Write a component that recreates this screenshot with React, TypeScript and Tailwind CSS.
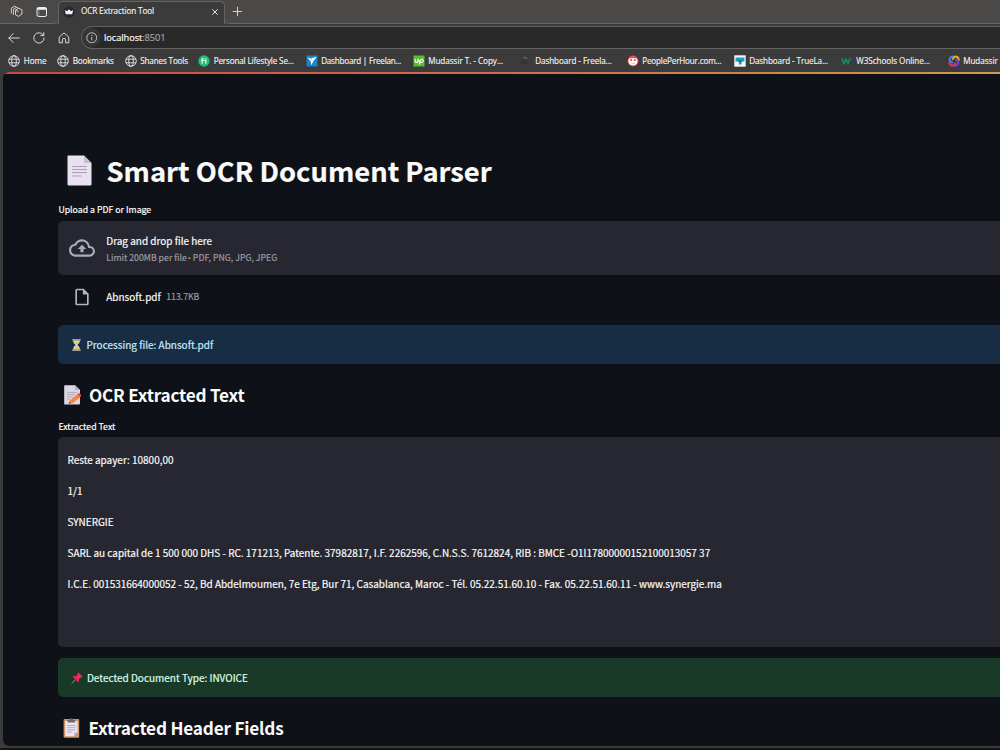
import type { ReactNode } from 'react';

const Globe = () => (
  <svg viewBox="0 0 12 12" className="size-3" fill="none" stroke="#e4e4e4" strokeWidth="0.9">
    <circle cx="6" cy="6" r="5.3" />
    <ellipse cx="6" cy="6" rx="2.3" ry="5.3" />
    <path d="M1 4.2h10M1 7.8h10" />
  </svg>
);

const Fiverr = () => (
  <svg viewBox="0 0 12 12" className="size-3">
    <circle cx="6" cy="6" r="5.7" fill="#1dbf73" />
    <path d="M3 5.2h4.9v3.6M4.2 8.8V4.6c0-.9.5-1.4 1.5-1.3" fill="none" stroke="#fff" strokeWidth="1.1" />
    <circle cx="7.9" cy="3.6" r=".65" fill="#fff" />
  </svg>
);

const Freelancer = () => (
  <svg viewBox="0 0 12 12" className="size-3">
    <path d="M.5 .5h11v11H.5z" fill="#1886ce" />
    <path d="M1.4 2.600l3.400 1L10.800 1.800 7.600 6 5.200 10.300 4.800 6.500z" fill="#fff" />
    <path d="M4.800 3.600 6 5.400" stroke="#1886ce" strokeWidth=".6" />
  </svg>
);

const Upwork = () => (
  <svg viewBox="0 0 12 12" className="size-3">
    <path d="M.5 .5h11v11H.5z" fill="#5bbc2e" />
    <path d="M2 3.8v2.1c0 1.9 3 1.9 3 0V3.8c.6 1.9 1.3 2.9 2 3.4M6.4 9.6l1-4.2c.5-1.8 3-1.4 2.9.4-.1 1.7-2 2-3.1.9" fill="none" stroke="#fff" strokeWidth="1.1" />
  </svg>
);

const Arc = () => (
  <svg viewBox="0 0 12 12" className="size-3">
    <path d="M2.500 3C4.300 1.300 6.800 1.800 8 4.600 6 3.200 4.500 3 2.500 3z" fill="#4a7aa8" />
    <path d="M0 8.5C1 6 3.5 4.8 6 5.2L8.5 9z" fill="#2f3438" />
  </svg>
);

const PeoplePerHour = () => (
  <svg viewBox="0 0 12 12" className="size-3">
    <circle cx="6" cy="6" r="5.1" fill="#fff" stroke="#e5402f" strokeWidth="1" />
    <path d="M1.4 3.6C3 .6 9 .6 10.6 3.6 8 2.7 4 2.7 1.4 3.6z" fill="#e5402f" />
    <circle cx="4.1" cy="5.1" r="1" fill="#e5402f" />
    <circle cx="7.9" cy="5.1" r="1" fill="#e5402f" />
    <path d="M4 8.3q2 .8 4 0" stroke="#f0a79e" strokeWidth=".6" fill="none" />
  </svg>
);

const TrueLancer = () => (
  <svg viewBox="0 0 12 12" className="size-3">
    <path d="M.3 .3h11.4v11.4H.3z" fill="#f6f6f6" />
    <path d="M1.6 2.6h8.8v4.2l-1.8-.6-1 1V9.4H4.8V7.2l-1.3-1-1.9.8z" fill="#1a9fbd" />
    <path d="M4 6l2 1.5L8 6v-.8H4z" fill="#166f92" />
  </svg>
);

const W3 = () => (
  <svg viewBox="0 0 12 12" className="size-3">
    <path d="M.8 3.4 3 8.600 5 4.200 7 8.600 8.900 3.600" fill="none" stroke="#139460" strokeWidth="1.500" />
    <path d="M9.6 3.2h1.400l-.8 1.200c.8.200.8 1.400-.5 1.400" fill="none" stroke="#11704b" strokeWidth=".7" />
  </svg>
);

const Swirl = () => (
  <svg viewBox="0 0 12 12" className="size-3" fill="none" strokeWidth="2.100">
    <path d="M5.600 1.500C2.600 1 .900 3.800 2.100 6.100 2.700 7.200 3.800 7.500 4.800 7.300" stroke="#2b8df0" />
    <path d="M10.700 5.600C11 2.600 8.400 .7 6.200 2.100 5 2.900 4.800 3.900 5 4.800" stroke="#f5a21b" />
    <path d="M6.400 10.600c3 .5 4.700-2.300 3.500-4.600C9.300 4.900 8.200 4.600 7.200 4.800" stroke="#7547d8" />
    <path d="M1.300 6.800c-.2 3 2.300 4.700 4.500 3.300C7 9.300 7.200 8.300 7 7.400" stroke="#ee2f5b" />
  </svg>
);

const bookmarks: { label: string; icon: ReactNode; cls: string }[] = [
  { label: 'Home', icon: <Globe />, cls: 'w-[49px]' },
  { label: 'Bookmarks', icon: <Globe />, cls: 'w-[67.5px] tracking-[-0.17px]' },
  { label: 'Shanes Tools', icon: <Globe />, cls: 'w-[73.5px] tracking-[-0.14px]' },
  { label: 'Personal Lifestyle Se...', icon: <Fiverr />, cls: 'w-[107.5px] tracking-[-0.14px]' },
  { label: 'Dashboard | Freelan...', icon: <Freelancer />, cls: 'w-[107px] tracking-[-0.22px]' },
  { label: 'Mudassir T. - Copy...', icon: <Upwork />, cls: 'w-[107px] tracking-[-0.03px]' },
  { label: 'Dashboard - Freela...', icon: <Arc />, cls: 'w-[107px] tracking-[-0.07px]' },
  { label: 'PeoplePerHour.com...', icon: <PeoplePerHour />, cls: 'w-[107px] tracking-[-0.16px]' },
  { label: 'Dashboard - TrueLa...', icon: <TrueLancer />, cls: 'w-[107px] tracking-[-0.1px]' },
  { label: 'W3Schools Online...', icon: <W3 />, cls: 'w-[107px] tracking-[-0.02px]' },
  { label: 'Mudassir', icon: <Swirl />, cls: 'tracking-[-0.03px]' },
];

const Browser = () => (
  <header className="shrink-0 font-['Open_Sans',sans-serif] [-webkit-text-stroke:0.15px]">
    <div className="flex h-6 bg-[#4b4947]">
      <div className="flex w-[58px] items-center gap-[13px] rounded-br-[5px] border-b border-[#696867] pl-2.5">
        <svg viewBox="0 0 13 13" className="size-[13px]" fill="none" stroke="#dedede" strokeWidth=".9" strokeLinejoin="round">
          <path d="M5.500 5.200 8.900 3.300l3 1.500v4.200l-3.300 2.400-3.100-1.600zM5.500 5.200l3.100 1.500" />
          <path d="M3.400 9.800V4.200L6.800 2.300l1.500.7M1.300 8.600V3.200L4.800 1.200l1.500.7" />
        </svg>
        <svg viewBox="0 0 12 12" className="size-3" fill="none" stroke="#ededed">
          <rect x="1" y="1.5" width="9.5" height="9" rx="1.6" />
          <path d="M1 2.8h9.5" strokeWidth="2" />
          <path d="M3 4v6" strokeWidth=".7" stroke="#9b9b9b" />
        </svg>
      </div>
      <div className="mt-px flex w-[167px] items-center rounded-t-[5px] border-x border-t border-[#646362] bg-[#3b3b3b] pr-[5px] pb-[2px] pl-1">
        <svg viewBox="0 0 12 12" className="size-3">
          <circle cx="6" cy="6" r="5.6" fill="#242734" />
          <path d="M1.8 4.1 4 5.3 6 3.2l2 2.1 2.2-1.2-1 4.2H2.8z" fill="#f2f2f2" />
        </svg>
        <span className="-mt-px ml-[6px] grow text-[8.2px] tracking-[-0.15px] whitespace-nowrap text-[#f0f0f0]">OCR Extraction Tool</span>
        <svg viewBox="0 0 8 8" className="size-2" stroke="#e2e2e2" strokeWidth="1"><path d="M1.3 1.3l5.4 5.4M6.7 1.3 1.3 6.7" /></svg>
      </div>
      <div className="flex grow items-center rounded-bl-[5px] border-b border-[#696867] pb-px pl-[7px]">
        <svg viewBox="0 0 11 11" className="size-[11px]" stroke="#e0e0e0" strokeWidth=".9"><path d="M5.5 .8v9.4M.8 5.5h9.4" /></svg>
      </div>
    </div>
    <div className="flex h-[25px] items-center bg-[#3b3b3b] pt-[2px] pl-2">
      <svg viewBox="0 0 12 12" className="size-3" fill="none" stroke="#d8d8d8" strokeLinecap="round" strokeLinejoin="round"><path d="M11.2 6H.8M5.2 1.5.8 6l4.4 4.5" /></svg>
      <svg viewBox="0 0 12 12" className="ml-[13px] size-3" fill="none" stroke="#d8d8d8" strokeLinecap="round"><path d="M10.2 2.8A5.2 5.2 0 1 0 11.2 6M10.8.6v2.9H7.9" /></svg>
      <svg viewBox="0 0 12 12" className="ml-[13px] size-3" fill="none" stroke="#d8d8d8" strokeLinejoin="round"><path d="M1.2 5.1 6 .9l4.8 4.2v5.7H7.6V7.9a1.6 1.6 0 0 0-3.2 0v2.9H1.2z" /></svg>
      <div className="ml-[11px] flex h-[23px] grow items-center rounded-l-full border border-r-0 border-[#636363] bg-[#292929]">
        <span className="flex size-[19px] items-center justify-center rounded-full bg-[#363636]">
          <svg viewBox="0 0 12 12" className="size-[11.5px]" fill="none" stroke="#d6d6d6" strokeWidth=".9"><circle cx="6" cy="6" r="5.2" /><path d="M6 5.3v3.4M6 3.1v1.1" /></svg>
        </span>
        <span className="ml-[3px] text-[9.3px] tracking-[-0.08px] text-white">localhost<span className="text-[#a5a5a5]">:8501</span></span>
      </div>
    </div>
    <nav className="flex h-[23px] items-center overflow-hidden bg-[#3b3b3b] pt-[2px] pl-2 text-[8.1px] text-[#f2f2f2]">
      {bookmarks.map((b, i) => (
        <div key={i} className={`flex shrink-0 items-center gap-[3.7px] whitespace-nowrap ${b.cls}`}>
          {b.icon}
          <span>{b.label}</span>
        </div>
      ))}
    </nav>
  </header>
);

const PageIcon = () => (
  <svg viewBox="0 0 25 31" className="h-[31px] w-[25px]">
    <path d="M1.5.5H17L24.5 8v21.3c0 .7-.4 1.2-1.2 1.2H1.5c-.7 0-1-.5-1-1.2V1.6C.5.9.8.5 1.5.5z" fill="#e9e1f1" />
    <path d="M17 .5V7c0 .7.4 1 1 1h6.500z" fill="#c5bccd" />
    <path d="M5 11.5h15M5 14.500h15M5 17.500h15M5 21h9.500" stroke="#aaa1b2" strokeWidth="1.1" />
  </svg>
);

const MemoIcon = () => (
  <svg viewBox="0 0 18 20" className="h-5 w-[18px]">
    <path d="M.8.3H11L16 5v13.600q0 1-1 1H.8q-.6 0-.6-.6V.9q0-.6.6-.6z" fill="#dcd7e3" />
    <path d="M11 .3V5h5z" fill="#b9b3c1" />
    <path d="M3 7.500h10M3 9.600h8M3 11.800h6M3 14h3" stroke="#aaa4b2" strokeWidth=".8" />
    <path d="M4.700 18.800 6 15.300l7-5.900 2.700 3-7 5.900z" fill="#f98440" />
    <path d="m13 9.400 1.300-1.100q.8-.6 1.500.1l1.200 1.400q.6.8-.1 1.500l-1.200 1.100z" fill="#ef4d55" />
    <path d="m4.700 18.800.7-2 1.400 1.300z" fill="#503f46" />
  </svg>
);

const HourglassIcon = () => (
  <svg viewBox="0 0 9 12" className="h-3 w-[9px]">
    <path d="M1 1.500h7Q8 4.500 5.300 6 8 7.500 8 10.500H1Q1 7.500 3.700 6 1 4.500 1 1.500z" fill="#c6dde7" />
    <path d="M2 3h5Q6 4.700 4.500 5.600 3 4.700 2 3zM1.800 10.200Q3 8 4.500 7.500 6 8 7.200 10.200z" fill="#f5bd4f" />
    <path d="M.3.9h8.400M.3 11.100h8.400" stroke="#cfc2b1" strokeWidth="1.300" />
  </svg>
);

const PinIcon = () => (
  <svg viewBox="0 0 12 12" className="size-3">
    <path d="M.6 11.500 4.500 7.600" stroke="#a6a2ad" strokeWidth=".9" />
    <path d="M7.300.5 11.500 4.600l-.7.8-1-.1-1.900 1.900.1 2.100-.9.900L1.800 5l.9-.9 2.300.1 1.800-1.800-.2-1.200z" fill="#f12d5c" />
    <path d="M1.800 5 7.100 10.200 8 9.300 5 4.200z" fill="#c51e4b" opacity=".4" />
  </svg>
);

const ClipboardIcon = () => (
  <svg viewBox="0 0 17 20" className="h-5 w-[17px]">
    <rect x=".6" y="1" width="15.600" height="18.700" rx="1" fill="#cf9463" />
    <path d="M2.200 3h12.400v11.500l-3.600 3.700H2.200z" fill="#ece5f2" />
    <path d="M11 18.200v-3.700h3.600z" fill="#bdb2c7" />
    <path d="M4.600 1.900h2q.2-1.700 1.800-1.700t1.800 1.700h2v2.600H4.600z" fill="#6c6874" />
    <path d="M4.200 7.500h8.400M4.200 9.700h8.400M4.200 11.900h8.400M4.200 14.100h4.500" stroke="#a69cad" strokeWidth=".8" />
  </svg>
);

const lines = [
  'Reste apayer: 10800,00',
  '1/1',
  'SYNERGIE',
  'SARL au capital de 1 500 000 DHS - RC. 171213, Patente. 37982817, I.F. 2262596, C.N.S.S. 7612824, RIB : BMCE -O1l17800000152100013057 37',
  'I.C.E. 001531664000052 - 52, Bd Abdelmoumen, 7e Etg, Bur 71, Casablanca, Maroc - Tél. 05.22.51.60.10 - Fax. 05.22.51.60.11 - www.synergie.ma',
];

export default function App() {
  return (
    <div className="flex h-[750px] w-[1000px] flex-col overflow-hidden bg-[#3b3b3b]">
      <Browser />
      <div className="ml-[3px] flex h-[674px] flex-col overflow-hidden rounded-l-[6px] bg-[#0e1117]">
        <div className="h-0.5 shrink-0 bg-linear-to-r from-[#d04341] via-[#cd6f4e] to-[#c99b50]" />
        <main className="flex flex-col pt-[73px] pl-[55px] font-['Noto_Sans_CJK_SC',sans-serif] whitespace-nowrap text-[#fafafa] [-webkit-text-stroke:0.2px]">
          <h1 className="flex h-[46px] items-center gap-[14.5px] pl-[9px] text-[27.33px] leading-[46px] font-bold">
            <PageIcon />
            <span className="-mt-px">Smart OCR Document Parser</span>
          </h1>
          <label className="mt-2 h-5 pl-[0.4px] text-[8.76px] leading-[18px]">Upload a PDF or Image</label>
          <div className="flex h-[54px] items-center rounded-l-[5px] bg-[#262730] pl-[11px]">
            <svg viewBox="0 0 24 24" className="size-[26px]" fill="#a9abb9">
              <path d="M19.350 10.040A7.490 7.490 0 0 0 12 4C9.110 4 6.600 5.640 5.350 8.040A5.994 5.994 0 0 0 0 14c0 3.310 2.690 6 6 6h13c2.760 0 5-2.240 5-5 0-2.640-2.050-4.780-4.650-4.960zM19 18H6c-2.210 0-4-1.790-4-4 0-2.050 1.530-3.760 3.560-3.970l1.070-.11.500-.95A5.469 5.469 0 0 1 12 6c2.620 0 4.880 1.860 5.390 4.430l.3 1.500 1.530.11A2.980 2.980 0 0 1 22 15c0 1.650-1.350 3-3 3zM8 13h2.550v3h2.900v-3H16l-4-4z" />
            </svg>
            <div className="ml-[11.3px] flex flex-col pt-px">
              <span className="text-[9.97px] leading-[17px]">Drag and drop file here</span>
              <span className="text-[8.76px] leading-[17px] text-[#9b9ba1]">
                Limit 200MB per file<span className="mx-px font-['Open_Sans'] text-[8px]">•</span>
                <span className="ml-px">PDF, PNG, JPG, JPEG</span>
              </span>
            </div>
          </div>
          <div className="flex h-[50px] items-center pb-[6px] pl-[14px]">
            <svg viewBox="0 0 24 24" className="size-5" fill="#b2b4c0">
              <path d="M14 2H6c-1.100 0-1.990.9-1.990 2L4 20c0 1.100.89 2 1.990 2H18c1.100 0 2-.9 2-2V8l-6-6zM6 20V4h7v5h5v11H6z" />
            </svg>
            <span className="ml-[14.3px] text-[9.97px] leading-5">Abnsoft.pdf</span>
            <span className="ml-[5.5px] text-[8.7px] leading-5 text-[#9b9ba1]">113.7KB</span>
          </div>
          <div className="flex h-[39px] items-center gap-[5.5px] rounded-l-[5px] bg-[#172d43] pl-[14px] text-[#c7ebff]">
            <HourglassIcon />
            <span className="text-[10px] leading-5">Processing file: Abnsoft.pdf</span>
          </div>
          <h2 className="mt-[17px] flex h-7 items-center gap-[7.5px] pl-[5.500px] text-[17.2px] leading-7 font-bold tracking-[-0.22px] [-webkit-text-stroke:0]">
            <MemoIcon />
            <span>OCR Extracted Text</span>
          </h2>
          <label className="mt-2 h-[20px] pl-[0.4px] text-[8.76px] leading-[19px]">Extracted Text</label>
          <div className="flex h-[210px] flex-col rounded-l-[5px] bg-[#262730] pt-[7px] pl-[9.500px] text-[9.965px] leading-[31.1px]">
            {lines.map((l) => (
              <p key={l}>{l}</p>
            ))}
          </div>
          <div className="mt-[11px] flex h-[39px] items-center gap-[4px] rounded-l-[5px] bg-[#193a29] pl-[13px] text-[#dffde9]">
            <PinIcon />
            <span className="text-[9.99px] leading-5">Detected Document Type: INVOICE</span>
          </div>
          <h2 className="mt-[17px] flex h-7 items-center gap-[8.5px] pl-[5px] text-[17.2px] leading-7 font-bold tracking-[-0.2px] [-webkit-text-stroke:0]">
            <ClipboardIcon />
            <span>Extracted Header Fields</span>
          </h2>
        </main>
      </div>
      <div className="mt-0.5 h-0.5 bg-[#151516]" />
    </div>
  );
}
